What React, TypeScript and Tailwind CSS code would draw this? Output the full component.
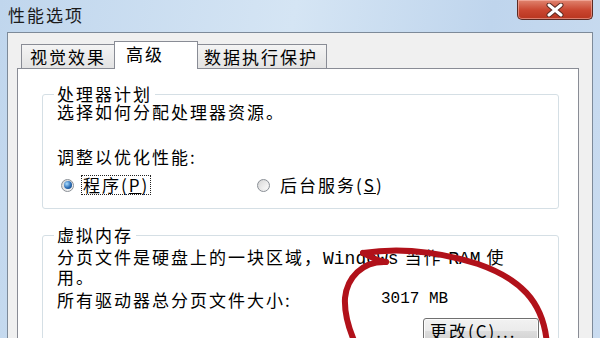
const cjk = "font-['Noto_Sans_CJK_SC',sans-serif]";
const mono = "font-['Liberation_Mono',monospace] tracking-normal";

function Radio({ checked }: { checked?: boolean }) {
  return (
    <span className="flex h-[13px] w-[13px] items-center justify-center rounded-full border border-[#8a8f96] bg-[linear-gradient(135deg,#d6d6d6,#f8f8f8)]">
      {checked ? (
        <span className="h-[8px] w-[8px] rounded-full bg-[radial-gradient(circle_at_35%_35%,#a8dcff,#2b6cb4_55%,#0b3567)]" />
      ) : (
        <span className="h-[8px] w-[8px] rounded-full bg-[linear-gradient(135deg,#dcdcdc,#fafafa)]" />
      )}
    </span>
  );
}

export default function App() {
  return (
    <div
      className={`relative flex h-[338px] w-[600px] flex-col overflow-hidden bg-[linear-gradient(100deg,#c0d6ed,#d5e5f4_45%,#bfd5ed_75%,#cadcf0)] text-[17px] tracking-[2px] text-black ${cjk}`}
    >
      {/* title bar */}
      <div className="flex h-[32px] shrink-0 items-start justify-between">
        <div className="pl-[8px] pt-[4px] text-[17px] leading-[22px] text-[#1b1b1b]">性能选项</div>
        <div className="mr-[7px] flex h-[20px] w-[76px] items-center justify-center rounded-b-[5px] border border-t-0 border-[#5b2b24] bg-[linear-gradient(#e0846f,#c9452f_55%,#b8351f)] shadow-[inset_0_0_0_1px_rgba(255,200,190,0.5)]">
          <svg width="20" height="14" viewBox="0 0 20 14">
            <path d="M4 2 L16 12 M16 2 L4 12" stroke="#5a2a22" strokeWidth="5" strokeLinecap="round" />
            <path d="M4 2 L16 12 M16 2 L4 12" stroke="#ffffff" strokeWidth="3" strokeLinecap="round" />
          </svg>
        </div>
      </div>

      {/* client area */}
      <div className="ml-[7px] mr-[7px] flex flex-1 flex-col border border-b-0 border-[#7d8a99] bg-[#f0f0f0] pl-[9px] pr-[13px] pt-[8px]">
        {/* tabs */}
        <div className="relative z-10 -mb-px flex items-end pl-[4px]">
          <div className="flex h-[25px] w-[94px] items-center border border-[#898c95] bg-[linear-gradient(#f4f4f4,#e3e3e3)] pl-[8px] leading-[20px]">
            视觉效果
          </div>
          <div className="-ml-px flex h-[28px] w-[84px] items-start border border-b-0 border-[#898c95] bg-white pl-[11px] pt-[2px] leading-[20px]">
            高级
          </div>
          <div className="-ml-px flex h-[25px] w-[130px] items-center border border-[#898c95] bg-[linear-gradient(#f4f4f4,#e3e3e3)] pl-[6px] leading-[20px]">
            数据执行保护
          </div>
        </div>

        {/* panel */}
        <div className="flex-1 border border-[#898c95] bg-white pt-[16px]">
          <fieldset className="ml-[24px] mr-[19px] rounded-[3px] border border-[#d5dfe5] pb-[13px]">
            <legend className="ml-[11px] px-[3px] leading-[18px]">处理器计划</legend>
            <div className="pl-[14px]">
              <div className="leading-[17px]">选择如何分配处理器资源。</div>
              <div className="mt-[28px] leading-[17px]">调整以优化性能:</div>
              <div className="mt-[10px] flex h-[20px] items-center">
                <div className="ml-[4px] flex w-[196px] items-center">
                  <Radio checked />
                  <span className="ml-[7px] border border-dotted border-[#222] px-[1px] leading-[18px]">
                    程序(<span className="underline">P</span>)
                  </span>
                </div>
                <div className="flex items-center">
                  <Radio />
                  <span className="ml-[10px] leading-[18px]">
                    后台服务(<span className="underline">S</span>)
                  </span>
                </div>
              </div>
            </div>
          </fieldset>

          <fieldset className="ml-[24px] mr-[19px] mt-[17px] rounded-[3px] border border-[#d5dfe5] pb-[20px]">
            <legend className="ml-[11px] px-[3px] leading-[18px]">虚拟内存</legend>
            <div className="pl-[14px] pr-[19px]">
              <div className="mt-[4px] whitespace-nowrap leading-[17px]">
                分页文件是硬盘上的一块区域，<span className={`${mono} text-[18px]`}>Windows</span> 当作{" "}
                <span className={`${mono} text-[18px]`}>RAM</span> 使
                <br />
                用。
              </div>
              <div className="mt-[6px] flex leading-[17px]">
                <span className="w-[324px]">所有驱动器总分页文件大小:</span>
                <span className={`${mono} text-[16px]`}>3017 MB</span>
              </div>
              <div className="mt-[10px] flex justify-end">
                <button className="flex h-[26px] w-[116px] items-center rounded-[3px] border border-[#707070] bg-[linear-gradient(#f2f2f2,#ebebeb_50%,#dddddd_51%,#cfcfcf)] pl-[6px] text-[17px] leading-[18px] tracking-[2px] shadow-[inset_0_0_0_1px_#fcfcfc]">
                  更改(<span className="underline">C</span>)...
                </button>
              </div>
            </div>
          </fieldset>
        </div>
      </div>

      {/* hand-drawn annotation */}
      <svg className="pointer-events-none absolute left-0 top-0" width="600" height="338" viewBox="0 0 600 338">
        <g fill="none" stroke="#b1111a" strokeWidth="6" strokeLinecap="round">
          <path d="M363 253 C 400 247, 440 252, 478 264 C 518 278, 544 300, 547 345" />
          <path d="M386 262 C 362 261, 347 278, 345 298 C 344 316, 350 332, 356 345" />
          <path d="M363 253 C 372 258, 378 261, 386 262" />
        </g>
      </svg>
    </div>
  );
}
